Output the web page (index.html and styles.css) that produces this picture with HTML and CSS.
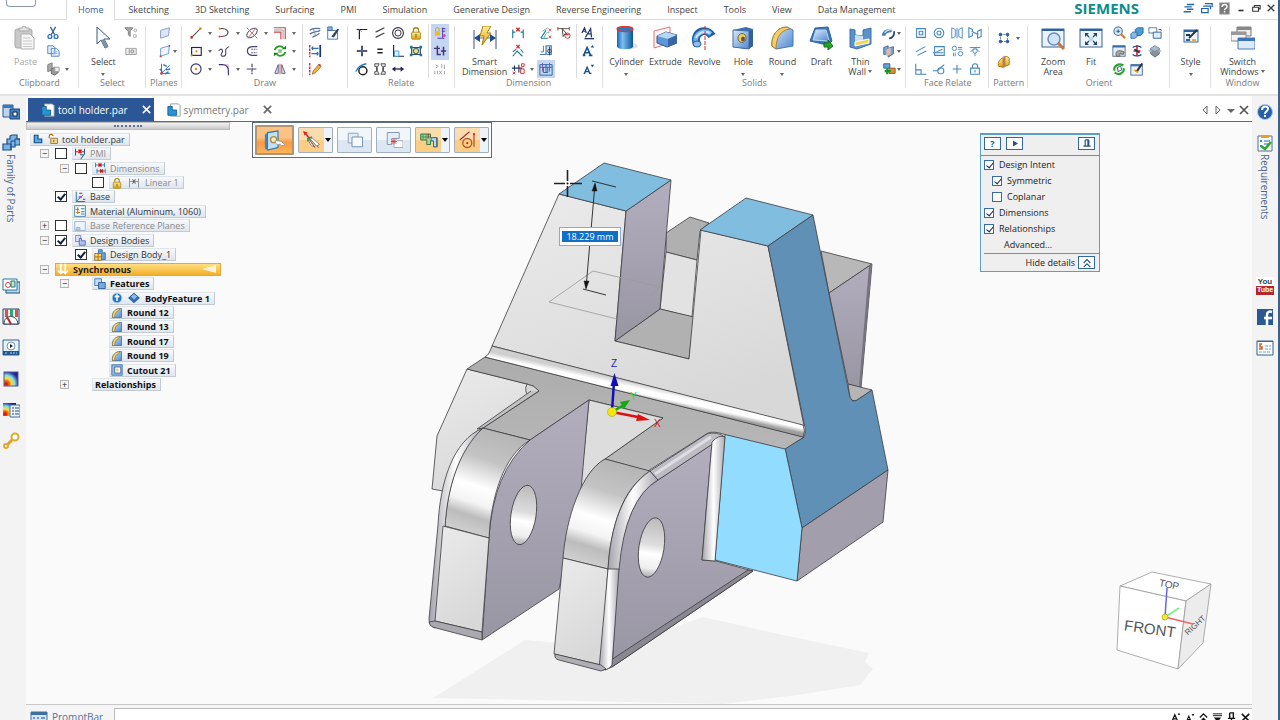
FILE: index.html
```html
<!DOCTYPE html>
<html lang="en">
<head>
<meta charset="utf-8">
<title>tool holder.par</title>
<link rel="stylesheet" href="styles.css">
</head>
<body>
<svg class="sprite" width="0" height="0" aria-hidden="true">
<defs>
<linearGradient id="gb" x1="0" y1="0" x2="1" y2="1"><stop offset="0" stop-color="#d8ebfb"/><stop offset="1" stop-color="#4f86cf"/></linearGradient>
<linearGradient id="gd" x1="0" y1="0" x2="1" y2="0"><stop offset="0" stop-color="#1466b4"/><stop offset=".35" stop-color="#7cc0f0"/><stop offset="1" stop-color="#0c559e"/></linearGradient>
<linearGradient id="gy" x1="0" y1="0" x2="0" y2="1"><stop offset="0" stop-color="#fff0a0"/><stop offset="1" stop-color="#e0a010"/></linearGradient>
<radialGradient id="heat" cx=".15" cy=".85" r="1.1"><stop offset="0" stop-color="#d00"/><stop offset=".2" stop-color="#e61"/><stop offset=".35" stop-color="#fd3"/><stop offset=".55" stop-color="#8dd"/><stop offset=".8" stop-color="#23a"/><stop offset="1" stop-color="#216"/></radialGradient>
</defs>
<symbol id="cut" viewBox="0 0 16 16"><path d="M5 1l5 9M11 1L6 10" stroke="#3b5f8f" stroke-width="1.5"/><circle cx="4.5" cy="12" r="2.2" fill="none" stroke="#2f75c0" stroke-width="1.5"/><circle cx="11.5" cy="12" r="2.2" fill="none" stroke="#2f75c0" stroke-width="1.5"/></symbol>
<symbol id="copy" viewBox="0 0 16 16"><path d="M2 2h6l2 2v7H2zM6 5h6l3 3v6H6z" fill="#e5f0fb" stroke="#4c82bd"/><path d="M8 9h5M8 11h5" stroke="#8cb0da"/></symbol>
<symbol id="pastesp" viewBox="0 0 16 16"><path d="M2 3l5-2v8l-5 2z" fill="#aaa" stroke="#777"/><path d="M6 8l4-2 4 2v4l-4 3-4-2z" fill="#999" stroke="#666"/><path d="M10 6h5v5h-5z" fill="#eee" stroke="#999"/></symbol>
<symbol id="paste" viewBox="0 0 24 24"><rect x="2" y="3" width="17" height="19" rx="2" fill="#c9c9c9" stroke="#a9a9a9"/><path d="M6 5V2h3l1-2h2l1 2h3v3z" fill="#e2e2e2" stroke="#a9a9a9"/><path d="M8 8h9l4 4v11H8z" fill="#f6f6f6" stroke="#b0b0b0"/><path d="M10 12h7M10 15h9M10 18h9M10 20.5h9" stroke="#c9c9c9"/></symbol>
<symbol id="pointer" viewBox="0 0 24 24"><path d="M6 1v17l4-4 4 8 3-1.5-4-7.5h6z" fill="#f6fbff" stroke="#3f5873"/><path d="M10 14l4 8 3-1.5-4-7.5z" fill="#7c93a8"/></symbol>
<symbol id="filter" viewBox="0 0 16 16"><path d="M1 2h9L7 6v6l-2-2V6z" fill="#aaa" stroke="#777"/><circle cx="13" cy="5" r="1.5" fill="none" stroke="#999"/><path d="M11 10h3v3h-3z" fill="none" stroke="#aaa"/></symbol>
<symbol id="selopt" viewBox="0 0 16 16"><path d="M2 5h12v7H2z" fill="#eee" stroke="#999"/><path d="M6 6v5M8 7h3v3H8z" fill="none" stroke="#888"/></symbol>
<symbol id="pl1" viewBox="0 0 16 16"><path d="M3 5l10-3-1 9-9 3z" fill="#dbe7f7" stroke="#7d95bd"/></symbol>
<symbol id="pl2" viewBox="0 0 16 16"><path d="M3 5l10-3-1 9-9 3z" fill="#eef4fc" stroke="#6b93c8"/><circle cx="3" cy="14" r="1.2" fill="#d33"/><circle cx="13" cy="2" r="1" fill="#d33"/></symbol>
<symbol id="pl3" viewBox="0 0 16 16"><path d="M4 2v11h10M4 13l9-9" fill="none" stroke="#2463a8"/><path d="M6 3l4 2M9 9l5-1M2 8l3 3M8 14l4-3" stroke="#2c78c0" stroke-width="1.5"/><circle cx="4" cy="13" r="1.5" fill="#d33"/></symbol>
<symbol id="line" viewBox="0 0 16 16"><path d="M3 13L13 3" stroke="#555" stroke-width="1.2"/><circle cx="3" cy="13" r="1.5" fill="#e22"/><circle cx="13" cy="3" r="1.5" fill="#e80"/></symbol>
<symbol id="arc" viewBox="0 0 16 16"><path d="M4 3c6-1 10 3 8 6-1 3-5 3-8 3" fill="none" stroke="#446" stroke-width="1.200"/><circle cx="3" cy="3" r="1.2" fill="#e80"/><circle cx="3" cy="12" r="1.2" fill="#d33"/></symbol>
<symbol id="curvex" viewBox="0 0 16 16"><ellipse cx="8" cy="8" rx="7" ry="4" transform="rotate(-40 8 8)" fill="none" stroke="#335"/><path d="M2 2l12 12M13 2L3 14" stroke="#d55"/></symbol>
<symbol id="offset" viewBox="0 0 16 16"><path d="M1 2h13v13M1 7h8v8" fill="none" stroke="#c44" stroke-width="1.3"/><path d="M1 4.500h10.500V15" fill="none" stroke="#889"/></symbol>
<symbol id="rect" viewBox="0 0 16 16"><rect x="3" y="4" width="11" height="9" fill="none" stroke="#225" stroke-width="1.3"/><circle cx="8.5" cy="8.5" r="1.3" fill="#e80"/><circle cx="3" cy="13" r="1.2" fill="#e80"/></symbol>
<symbol id="spline" viewBox="0 0 16 16"><path d="M2 8c3-5 6 0 3 3-2 4 5 4 5 0s-1-6 4-8" fill="none" stroke="#446" stroke-width="1.2"/></symbol>
<symbol id="cshape" viewBox="0 0 16 16"><path d="M14 3H8c-7 1-7 9 0 10h6" fill="none" stroke="#447" stroke-width="1.4"/><path d="M7 6h7M7 10h7" stroke="#447" stroke-dasharray="2 1"/></symbol>
<symbol id="green" viewBox="0 0 16 16"><path d="M2 7c1-5 8-6 10-2M14 9c-1 5-8 6-10 2" fill="none" stroke="#2a9a2a" stroke-width="2"/><path d="M10 6h5V2zM6 10H1v4z" fill="#1c7f1c"/><rect x="6" y="6" width="4" height="4" fill="#7c7"/></symbol>
<symbol id="circle" viewBox="0 0 16 16"><circle cx="8" cy="8" r="5.8" fill="none" stroke="#336" stroke-width="1.3"/><circle cx="8" cy="8" r="1.3" fill="#e80"/></symbol>
<symbol id="fillet" viewBox="0 0 16 16"><path d="M2 3h4c5 0 7 3 7 7v5" fill="none" stroke="#337" stroke-width="1.3"/><path d="M9 3h4v4" fill="none" stroke="#c7a" stroke-dasharray="1 1"/></symbol>
<symbol id="trimx" viewBox="0 0 16 16"><path d="M8 2v12" stroke="#447" stroke-width="1.4" stroke-dasharray="4 1"/><path d="M2 8h12" stroke="#447" stroke-width="1.4" stroke-dasharray="5 1"/></symbol>
<symbol id="mirror" viewBox="0 0 16 16"><path d="M6 3v10H2zM10 3v10h4z" fill="#dde6f4" stroke="#558"/><path d="M8 2v12" stroke="#c44"/></symbol>
<symbol id="wrap" viewBox="0 0 16 16"><path d="M2 5c4-4 9-2 12-2M2 9c5-3 9-2 12-4M5 13c3-3 6-1 8-5" fill="none" stroke="#579" stroke-width="1.4"/><path d="M6 3l3 9" stroke="#88a"/></symbol>
<symbol id="table2" viewBox="0 0 16 16"><rect x="2" y="5" width="11" height="10" fill="#fff" stroke="#36c"/><path d="M2 1h5v4H2z" fill="#8bd" stroke="#36a"/><path d="M6 12l7-9 2 1-6 9z" fill="#345"/></symbol>
<symbol id="symdim" viewBox="0 0 16 16"><path d="M2 1v14" stroke="#c22" stroke-width="1.5" stroke-dasharray="3 1"/><path d="M14 1v14" stroke="#236" stroke-width="2"/><path d="M4 5h8M4 11h7M4 5l2-2M4 5l2 2M12 11l-2-2M12 11l-2 2" stroke="#27b" stroke-width="1.3"/></symbol>
<symbol id="pencil" viewBox="0 0 16 16"><path d="M2 1v14" stroke="#c22" stroke-width="1.5" stroke-dasharray="3 1"/><path d="M5 14l1-4 6-7 3 2-6 7z" fill="#f1b43b" stroke="#875"/><path d="M11 3l3-1 1 3z" fill="#c33"/></symbol>
<symbol id="r1" viewBox="0 0 16 16"><path d="M5 15V4h9M2 4h3" fill="none" stroke="#222" stroke-width="1.4"/><path d="M4 3l4 4" stroke="#88a"/></symbol>
<symbol id="r2" viewBox="0 0 16 16"><path d="M3 7l10-5M3 13l10-5" stroke="#444" stroke-width="1.3"/></symbol>
<symbol id="r3" viewBox="0 0 16 16"><circle cx="8" cy="8" r="6.2" fill="none" stroke="#334" stroke-width="1.3"/><circle cx="8" cy="8" r="3.5" fill="none" stroke="#334" stroke-width="1.1"/></symbol>
<symbol id="lock" viewBox="0 0 16 16"><path d="M5 8V5c0-4 6-4 6 0v3" fill="none" stroke="#a8870b" stroke-width="1.5"/><rect x="3" y="7" width="10" height="8" rx="1" fill="url(#gy)" stroke="#a8870b"/><path d="M8 9v4" stroke="#640"/></symbol>
<symbol id="r5" viewBox="0 0 16 16"><path d="M8 2v12M2 8h12" stroke="#224" stroke-width="1.8"/><circle cx="8" cy="8" r="1.5" fill="#27b"/></symbol>
<symbol id="r6" viewBox="0 0 16 16"><path d="M5 6h6M5 10h6" stroke="#222" stroke-width="1.8"/></symbol>
<symbol id="r7" viewBox="0 0 16 16"><path d="M3 1v13h12" fill="none" stroke="#224" stroke-width="1.3"/><path d="M4 8h5v6H4z" fill="#dff0fb" stroke="#3aa0d0"/></symbol>
<symbol id="r8" viewBox="0 0 16 16"><rect x="3" y="4" width="10" height="8" fill="#bcd6c0" stroke="#236"/><circle cx="8" cy="8" r="3" fill="#e7dc88" stroke="#356"/><path d="M1 2h3v3H1zM12 2h3v3h-3zM1 11h3v3H1zM12 11h3v3h-3z" fill="#279"/></symbol>
<symbol id="r9" viewBox="0 0 16 16"><circle cx="9" cy="10" r="4.600" fill="none" stroke="#222" stroke-width="1.7"/><path d="M1 11C3 6 7 3 13 2" fill="none" stroke="#2080c0" stroke-width="1.5"/></symbol>
<symbol id="r10" viewBox="0 0 16 16"><path d="M2 2h5l-2 4v4l2 4H2v-3h2V5H2zM14 2H9l2 4v4l-2 4h5v-3h-2V5h2z" fill="#eee" stroke="#444"/></symbol>
<symbol id="r11" viewBox="0 0 16 16"><path d="M3 8h10" stroke="#225" stroke-width="1.5"/><path d="M1 8l4-3v6zM15 8l-4-3v6z" fill="#225"/></symbol>
<symbol id="r12" viewBox="0 0 16 16"><path d="M3 6V4c0-3 4-3 4 0v2" fill="none" stroke="#c90"/><path d="M2 6h6v5H2z" fill="#e9bb33"/><path d="M10 3h4M10 6h4M5 14h8M11 2v12" stroke="#54a" stroke-width="1.2"/><circle cx="13" cy="11" r="1.5" fill="#c3c"/></symbol>
<symbol id="r13" viewBox="0 0 16 16"><path d="M5 2v10h4M1 5h7M12 13V3M9 8h6" fill="none" stroke="#437" stroke-width="1.7"/></symbol>
<symbol id="r14" viewBox="0 0 16 16"><path d="M3 3l3 2-3 2M10 2v5M13 3v5M2 10v4M5 10v4M7 10l3 4M10 10l-3 4M13 10v4" fill="none" stroke="#999"/></symbol>
<symbol id="smart" viewBox="0 0 24 24"><path d="M1 4v19M23 4v19M2 12h20" stroke="#5a6f92" stroke-width="1.2"/><path d="M1 12l6-4v8zM23 12l-6-4v8z" fill="#1f4c95"/><path d="M10 0h8l-4 7h4L9 19l2-9H7z" fill="url(#gy)" stroke="#a88008"/></symbol>
<symbol id="d1" viewBox="0 0 16 16"><path d="M2 4v10M14 4v10M2 7h3M11 7h3" stroke="#278" stroke-width="1.3"/><path d="M6 2l4 4M10 2L6 6" stroke="#d22" stroke-width="1.5"/></symbol>
<symbol id="d2" viewBox="0 0 16 16"><path d="M2 14l5-6 6 6M2 9l4-3M11 6l3 4" fill="none" stroke="#278" stroke-width="1.3"/><path d="M6 1l4 4M10 1L6 5" stroke="#d22" stroke-width="1.5"/></symbol>
<symbol id="d3" viewBox="0 0 16 16"><path d="M1 7h12M4 4v6M9 3v9" stroke="#236" stroke-width="1.3"/><path d="M12 2h3v3h-3zM2 11l3 3M5 11l-3 3M11 8h4v5h-4z" fill="none" stroke="#d22"/></symbol>
<symbol id="d4" viewBox="0 0 16 16"><path d="M2 14h8M2 14l6-9" stroke="#279" stroke-width="1.3"/><path d="M4 6l6-4M6 13c1-4 3-6 6-6" fill="none" stroke="#4a9"/><path d="M11 3l3 3M14 3l-3 3M11 11l3 3M14 11l-3 3" fill="none" stroke="#d33"/></symbol>
<symbol id="d5" viewBox="0 0 16 16"><path d="M1 12h7V2h6v10H9" fill="#cde4f5" stroke="#47a" stroke-width="1.3"/><path d="M2 9h3V2" fill="none" stroke="#279"/><circle cx="12" cy="8" r="2" fill="#fff" stroke="#236"/><path d="M12 3v10" stroke="#236"/></symbol>
<symbol id="d6" viewBox="0 0 16 16"><path d="M1 3h14v12H1zM1 6h14M5 6v6h5V6M8 3v9" fill="#c2dcf2" stroke="#27589a"/><path d="M4 1v10M12 1v10" stroke="#75a"/></symbol>
<symbol id="d7" viewBox="0 0 16 16"><path d="M1 3h13M1 1v4M14 1v4" stroke="#643"/><path d="M6 3l1 9 2-3 3 1z" fill="#fff" stroke="#333"/><circle cx="12" cy="11" r="3" fill="none" stroke="#d22"/><path d="M10 10h4" stroke="#d22"/></symbol>
<symbol id="ta" viewBox="0 0 16 16"><path d="M1 8l3-6 2 6M2 6h3M5 13l6-10 1 10M7 9h5" fill="none" stroke="#236" stroke-width="1.4"/><path d="M4 14.5h11" stroke="#236" stroke-width="1.5"/></symbol>
<symbol id="tup" viewBox="0 0 16 16"><path d="M3 13L7 4l4 9M5 10h5M2 13h3M9 13h4" fill="none" stroke="currentColor" stroke-width="1.8"/><path d="M11 4l2-3 2 3z" fill="currentColor"/></symbol>
<symbol id="tdn" viewBox="0 0 16 16"><path d="M4 13l3-7 3 7M5 11h4M3 13h2M9 13h3" fill="none" stroke="currentColor" stroke-width="1.5"/><path d="M11 3l2 3 2-3z" fill="currentColor"/></symbol>
<symbol id="cyl" viewBox="0 0 24 24"><ellipse cx="16" cy="20" rx="8" ry="3" fill="#e0e0e0"/><path d="M3 3v18c2 3 14 3 16 0V3z" fill="url(#gd)"/><ellipse cx="11" cy="3" rx="8" ry="2.5" fill="#2b7bc2" stroke="#d33" stroke-width="1.3"/></symbol>
<symbol id="ext" viewBox="0 0 24 24"><path d="M1 5l16-4v16L1 22z" fill="#fff6f5" stroke="#d77"/><path d="M4 10l9-4 11 3v8l-10 4-10-4z" fill="#5d97d8" stroke="#30548c"/><path d="M4 10l9-4 11 3-9 4z" fill="#b6d6f3"/><path d="M15 13l9-4v8l-9 4z" fill="#3767a8"/></symbol>
<symbol id="rev" viewBox="0 0 24 24"><path d="M5 18C0 7 14 0 20 10" fill="none" stroke="#1f5da5" stroke-width="8"/><path d="M4 16C2 8 12 2 19 8" fill="none" stroke="#71b1e8" stroke-width="4.500"/><path d="M4 12c2-5 8-8 14-5" fill="none" stroke="#cce5f8" stroke-width="2"/><ellipse cx="5" cy="18" rx="4" ry="3" fill="#8dbfea" stroke="#2460a3"/><path d="M13 0v24" stroke="#c33" stroke-dasharray="4 1"/></symbol>
<symbol id="hole" viewBox="0 0 24 24"><path d="M2 4l13-3 7 2v17l-7 3-13-2z" fill="#3c6fb0"/><path d="M2 4l16 1v18L2 21z" fill="url(#gb)" stroke="#456da5"/><path d="M18 5l4-1v16l-4 3z" fill="#345f9d"/><ellipse cx="11" cy="12" rx="4" ry="4.500" fill="#f3cd55" stroke="#665"/><ellipse cx="12" cy="13" rx="2" ry="2.500" fill="#654"/></symbol>
<symbol id="round" viewBox="0 0 24 24"><path d="M2 20C1 10 7 1 17 1l6 3v16l-17 3z" fill="url(#gb)" stroke="#4679b4"/><path d="M2 20C1 10 7 1 17 1l3 2C11 4 6 11 6 23z" fill="#f5cf66" stroke="#a78731"/></symbol>
<symbol id="draft" viewBox="0 0 24 24"><path d="M6 2l13-1 4 14-5 4L1 15z" fill="#3d77bb" stroke="#2d619f"/><path d="M7 4h10l3 11-16-1z" fill="url(#gb)" stroke="#b7d9f4"/><path d="M15 17h4v-3l5 6-5 4v-3h-4z" fill="#25a525" stroke="#176c17"/></symbol>
<symbol id="thin" viewBox="0 0 24 24"><path d="M2 3l5 1v5l8 1V4l8-2v16L9 23l-7-2z" fill="#5a91cf" stroke="#3e70ac"/><path d="M7 9v8l8-2v-5z" fill="#c7e0f5"/><path d="M7 16l9-2 5-1v4L7 20z" fill="#f3d65a" stroke="#fff"/></symbol>
<symbol id="s1" viewBox="0 0 16 16"><path d="M2 11c0-4 3-6 9-6" fill="none" stroke="#3f7cbd" stroke-width="4"/><path d="M3 8c2-3 4-4 8-4" fill="none" stroke="#cce3f8" stroke-width="1.5"/><path d="M8 14c5 0 6-4 6-8" fill="none" stroke="#25497b" stroke-width="2"/></symbol>
<symbol id="s2" viewBox="0 0 16 16"><path d="M2 4l5-2v9l-5 1zM7 5l6-2v8l-6 4z" fill="#77a3d4" stroke="#3b6494"/><path d="M5 6l5-2v8l-5 2z" fill="#dba"/></symbol>
<symbol id="s3" viewBox="0 0 16 16"><path d="M2 2h7v5H2z" fill="#64a4df" stroke="#26598d"/><path d="M8 7h7v6H8z" fill="#e08c3b" stroke="#9a4c12"/><path d="M6 7v7M3 10.5h7" stroke="#179a25" stroke-width="2.5"/></symbol>
<symbol id="f1" viewBox="0 0 16 16"><path d="M3 3h10v10H3zM6 6h4v4H6z" fill="none" stroke="#4285bc" stroke-width="1.2"/></symbol>
<symbol id="f2" viewBox="0 0 16 16"><circle cx="8" cy="8" r="5.5" fill="none" stroke="#4285bc" stroke-width="1.2"/><circle cx="8" cy="8" r="2.300" fill="none" stroke="#4285bc" stroke-width="1.2"/></symbol>
<symbol id="f3" viewBox="0 0 16 16"><path d="M2 2l4 2v8l-4 2zM14 2l-4 2v8l4 2zM8 2v12" fill="none" stroke="#4285bc"/></symbol>
<symbol id="f4" viewBox="0 0 16 16"><path d="M1 2l4 2v7l-4 2zM15 4l-4 2v8l4-2zM4 6l8 4" fill="none" stroke="#4285bc" stroke-width="1.2"/></symbol>
<symbol id="f5" viewBox="0 0 16 16"><path d="M2 9l11-6M4 13l10-5" stroke="#4285bc" stroke-width="1.2"/></symbol>
<symbol id="f6" viewBox="0 0 16 16"><path d="M3 3h11v10H3zM1 10h12M5 9l7-3" fill="none" stroke="#4285bc" stroke-width="1.2"/></symbol>
<symbol id="f7" viewBox="0 0 16 16"><circle cx="5" cy="5" r="2.5" fill="none" stroke="#4285bc"/><circle cx="12" cy="11" r="2.5" fill="none" stroke="#4285bc"/><path d="M9 4h5M9 6h5M4 10v4M6 10v4" stroke="#4285bc"/></symbol>
<symbol id="f8" viewBox="0 0 16 16"><path d="M2 4h12M8 4l5 5M8 4L3 9M8 10v4" stroke="#4285bc"/><circle cx="8" cy="8" r="2.5" fill="#fff" stroke="#4285bc"/></symbol>
<symbol id="f9" viewBox="0 0 16 16"><path d="M2 2v12h12M2 9h6v5" fill="none" stroke="#4285bc" stroke-width="1.2"/></symbol>
<symbol id="f10" viewBox="0 0 16 16"><circle cx="10" cy="10" r="3.5" fill="none" stroke="#4285bc" stroke-width="1.2"/><path d="M1 10h5l8-7" fill="none" stroke="#4285bc" stroke-width="1.2"/></symbol>
<symbol id="f11" viewBox="0 0 16 16"><path d="M8 3v10M3 8h10" stroke="#4285bc" stroke-width="1.2"/></symbol>
<symbol id="f12" viewBox="0 0 16 16"><path d="M5 7V5c0-4 6-4 6 0v2M3 7h10v7H3zM8 9v3" fill="none" stroke="#4285bc" stroke-width="1.2"/></symbol>
<symbol id="pat" viewBox="0 0 16 16"><path d="M4 4h8v8H4z" fill="none" stroke="#47a" stroke-dasharray="2 1"/><g fill="#2c6cab" stroke="#174a80"><circle cx="4" cy="4" r="1.5"/><circle cx="12" cy="4" r="1.5"/><circle cx="4" cy="12" r="1.5"/><circle cx="12" cy="12" r="1.5"/></g></symbol>
<symbol id="pmir" viewBox="0 0 16 16"><path d="M7 3v11l-5-1c-2-4 1-8 5-10zM9 2v11l5-2V4c-1-2-3-3-5-2z" fill="url(#gy)" stroke="#a76b08"/><path d="M8 1v14" stroke="#a43"/></symbol>
<symbol id="zarea" viewBox="0 0 24 24"><rect x="1" y="3" width="22" height="18" fill="#eaf4fd" stroke="#3c6194"/><path d="M1 3h22v2H1z" fill="#2f609f"/><circle cx="13" cy="13" r="6" fill="#cfe4f7" stroke="#6a8fb6" stroke-width="1.5"/><path d="M17 17l6 6" stroke="#c87832" stroke-width="3"/></symbol>
<symbol id="fit" viewBox="0 0 24 24"><rect x="1" y="3" width="22" height="18" fill="#edf5fc" stroke="#3c6194"/><path d="M1 3h22v2H1z" fill="#2f609f"/><path d="M7 8l3 3M17 8l-3 3M7 18l3-3M17 18l-3-3" stroke="#246" stroke-width="1.3"/><path d="M6 7h4l-4 4zM18 7h-4l4 4zM6 19h4l-4-4zM18 19h-4l4-4z" fill="#246"/><path d="M10 11h4v4h-4z" fill="#bcd8ef"/></symbol>
<symbol id="o1" viewBox="0 0 16 16"><circle cx="7" cy="6" r="4.800" fill="#cfe6fb" stroke="#4a77a6" stroke-width="1.3"/><path d="M10 9l5 5" stroke="#d08032" stroke-width="2.500"/><path d="M5 6h4M7 4v4" stroke="#246"/></symbol>
<symbol id="o2" viewBox="0 0 16 16"><path d="M6 4l3-2h6v6l-3 3H6z" fill="#4a9bd8" stroke="#246ca5"/><path d="M1 9l2-2h5v5l-2 2H1z" fill="#85b9e4" stroke="#38699d"/></symbol>
<symbol id="o3" viewBox="0 0 16 16"><path d="M1 2h9v6H1z" fill="#fff" stroke="#4d7298"/><path d="M6 7h9v7H6z" fill="#e0edf9" stroke="#2c5e95"/><path d="M12 4h3v2" fill="none" stroke="#359"/></symbol>
<symbol id="o4" viewBox="0 0 16 16"><rect x="1" y="2" width="14" height="12" fill="#e5edf5" stroke="#4a6a94"/><path d="M1 2h14v2H1z" fill="#3a6aa8"/><path d="M5 14c-2-6 2-8 9-5l-1 3-4-1v3z" fill="#a9a69d" stroke="#666"/></symbol>
<symbol id="o5" viewBox="0 0 16 16"><path d="M3 4c4-3 9-1 10 0M3 12c4 3 9 1 10 0" fill="none" stroke="#1e4f95" stroke-width="1.5"/><path d="M8 1v13M4 8h8" stroke="#c22" stroke-width="1.8"/><path d="M5 6l6 4" stroke="#236" stroke-width="2"/></symbol>
<symbol id="o6" viewBox="0 0 16 16"><path d="M8 2l5 3v6l-5 4-5-4V5z" fill="#86929c" stroke="#566"/><path d="M0 8l4-2v4zM16 8l-4-2v4zM3 5l5-3 5 3-5 3z" fill="#a9bbca"/></symbol>
<symbol id="o7" viewBox="0 0 16 16"><path d="M3 10C1 4 8 1 13 4M13 7c2 5-5 9-10 5" fill="none" stroke="#28a52c" stroke-width="2.5"/><path d="M6 6l4-1 1 4-4 2z" fill="#fff" stroke="#247"/></symbol>
<symbol id="o8" viewBox="0 0 16 16"><rect x="1" y="3" width="13" height="12" fill="#edf4fb" stroke="#3c6194"/><path d="M1 3h13v2H1z" fill="#4278b5"/><path d="M6 11l7-10 2 1-6 9z" fill="#234"/><path d="M5 9l4 3" stroke="#e90" stroke-width="2"/></symbol>
<symbol id="style" viewBox="0 0 16 16"><rect x="1" y="2" width="14" height="12" fill="#ebf3fb" stroke="#3a67a2"/><path d="M1 2h14v2H1zM3 11h4v2H3z" fill="#2d629f"/><path d="M6 10l8-8M3 7h4" stroke="#234" stroke-width="1.8"/><path d="M9 11h4v2H9z" fill="#e9b13c"/></symbol>
<symbol id="switch" viewBox="0 0 24 24"><path d="M6 1h14v9H6z" fill="#eee" stroke="#777"/><path d="M6 1h14v3H6z" fill="#888"/><path d="M0 6h15v9H0z" fill="#f4f4f4" stroke="#888"/><path d="M0 6h15v3H0z" fill="#999"/><path d="M7 12h17v11H7z" fill="#dceafa" stroke="#4d7db7"/><path d="M7 12h17v3H7z" fill="#3d73ba"/></symbol>
<symbol id="doc" viewBox="0 0 16 16"><path d="M4 1h9l2 2v12H4z" fill="#fff" stroke="#899"/><path d="M1 4h5v4h5v6H1z" fill="#2794d5" stroke="#135a93"/></symbol>
<symbol id="part" viewBox="0 0 16 16"><path d="M3 3h5v5h5v5H3z" fill="#57a8e8" stroke="#13507f" stroke-width="1.5"/></symbol>
<symbol id="unlock" viewBox="0 0 16 16"><path d="M3 7V4c0-3 5-3 5 0" fill="none" stroke="#a56a15" stroke-width="1.5"/><path d="M5 7h9v7H5z" fill="#f4d48a" stroke="#8c6316"/><path d="M9 9v3" stroke="#531"/></symbol>
<symbol id="tpmi" viewBox="0 0 16 16"><path d="M2 1v9M14 1v8M2 5h4M10 5h4M8 9h5l-4 6" fill="none" stroke="#2a4d6b" stroke-width="1.3"/><path d="M6 2l4 5M10 2L6 7" stroke="#d11" stroke-width="2"/></symbol>
<symbol id="tdim" viewBox="0 0 16 16"><path d="M2 1v6M14 1v6M2 4h12M4 9v6M15 9v6M4 12h11" stroke="#2680a8" stroke-width="1.2"/><path d="M6 2l4 4M10 2L6 6M8 10l4 4M12 10l-4 4" stroke="#c11" stroke-width="2"/></symbol>
<symbol id="tlin" viewBox="0 0 16 16"><path d="M2 2v12M14 2v12M2 6h12" stroke="#8a949c" stroke-width="1.3"/><path d="M6 3l4 6M10 3L6 9" stroke="#555" stroke-width="1.3"/></symbol>
<symbol id="tbase" viewBox="0 0 16 16"><path d="M3 1v13h12M3 14l9-9" fill="none" stroke="#2175ab" stroke-width="1.3"/><path d="M7 3h4M6 8h4M12 11h3" stroke="#536" stroke-width="1.3"/><circle cx="9" cy="8" r="1.5" fill="#a5a"/></symbol>
<symbol id="tmat" viewBox="0 0 16 16"><rect x="1" y="1" width="14" height="14" fill="#fff" stroke="#268"/><path d="M5 3v9M2 6h5M3 10h5" stroke="#c72" stroke-width="1.6"/><path d="M9 5h5M9 9h5M9 12h5" stroke="#18a" stroke-width="1.3"/></symbol>
<symbol id="tpl" viewBox="0 0 16 16"><path d="M1 2h14v12H1z" fill="#edf3fa" stroke="#8ba5c7"/><path d="M3 10h5v3H3z" fill="#c7daed" stroke="#8ba5c7"/></symbol>
<symbol id="tbod" viewBox="0 0 16 16"><path d="M2 2h7v8H2z" fill="#d9dff4" stroke="#6372b5"/><path d="M7 6h3v3h5v6H7z" fill="#acc2ef" stroke="#4057ae"/></symbol>
<symbol id="tbod1" viewBox="0 0 16 16"><path d="M6 1h5v4h4v9H6z" fill="#6f9fdc" stroke="#2d559c"/><path d="M1 6h9v9H1zM5.5 6v9M1 10.5h9" fill="#ffd66c" stroke="#8d5e0d"/></symbol>
<symbol id="tsync" viewBox="0 0 16 16"><path d="M5 1v13M11 1v13M1 10l4 4 3-3 3 3 4-4" fill="none" stroke="#fff" stroke-width="2.2"/></symbol>
<symbol id="tfeat" viewBox="0 0 16 16"><path d="M1 1h9v9H1z" fill="#c7ddf5" stroke="#26659f"/><path d="M6 6h9v8H6z" fill="#76a9df" stroke="#124d8c"/></symbol>
<symbol id="info" viewBox="0 0 16 16"><circle cx="8" cy="8" r="6.5" fill="#2276c5" stroke="#b9d7f2"/><path d="M8 4v8M5 7l3-3 3 3" fill="none" stroke="#fff" stroke-width="2"/></symbol>
<symbol id="bf" viewBox="0 0 16 16"><path d="M8 1l8 7-8 7-8-7z" fill="#346daf"/><path d="M8 2l5 4-5 5-5-5z" fill="#8ab8e8" stroke="#275887"/></symbol>
<symbol id="trnd" viewBox="0 0 16 16"><path d="M2 14C1 7 6 2 14 2v12z" fill="url(#gb)" stroke="#3d6aa3"/><path d="M2 14C1 7 6 2 12 2l-2 3C6 6 5 10 5 14z" fill="#f3da73" stroke="#857643"/></symbol>
<symbol id="tcut" viewBox="0 0 16 16"><path d="M1 1h14v14H1z" fill="#8db7e5" stroke="#356da7"/><path d="M5 4h8v8H5z" fill="#fff" stroke="#36568b"/><path d="M7 6h3v4H7z" fill="#f5cd67"/></symbol>
<symbol id="c1" viewBox="0 0 24 24"><path d="M4 3l12-2v19l-12 3z" fill="#bfe0fb" stroke="#2873aa" stroke-width="1.2"/><path d="M4 3L1 5v16l3 2z" fill="#4184c1"/><circle cx="11" cy="11" r="3.500" fill="#fbe9bb" stroke="#ae8a45" stroke-width="1.5"/><path d="M13 12l7 1 4 4-4 1-2-2-2 1-3-2z" fill="#fff" stroke="#89a"/></symbol>
<symbol id="c2" viewBox="0 0 24 24"><path d="M7 9l14 13" fill="none" stroke="#555" stroke-width="1.300"/><path d="M7 9l9 13-6-4-4-8zM12 9l10 9-4 2-8-9z" fill="#fff" stroke="#556b86"/><path d="M6 9l10 13" stroke="#b33" stroke-dasharray="3 1"/><path d="M12 8l-5 2-1 4" fill="none" stroke="#2c9a3d" stroke-width="1.800"/><path d="M8 9L3 3" stroke="#d22" stroke-width="2"/><path d="M0 0l6 2-4 4z" fill="#d22"/></symbol>
<symbol id="c3" viewBox="0 0 24 24"><path d="M3 3h13v13H3z" fill="#e4edf6" stroke="#8da4c0" stroke-width="1.3"/><path d="M8 8h14v13H8z" fill="#f7faff" stroke="#7590b2" stroke-width="1.3"/></symbol>
<symbol id="c4" viewBox="0 0 24 24"><path d="M3 2h16v8H9v8H3z" fill="#e4edf6" stroke="#8497b3" stroke-width="1.3"/><path d="M16 13h8v9H12v-4" fill="#fff" stroke="#8497b3"/><path d="M8 14h8M12 10v8M9 11l6 6M15 11l-6 6" stroke="#e32" stroke-width="1.2"/></symbol>
<symbol id="c5" viewBox="0 0 24 24"><path d="M1 4h13v5h9v12h-5v-8h-4v5H9v-6H1z" fill="#a9d493" stroke="#277c46" stroke-width="1.3"/><path d="M15 9h7v12h-4v-8h-3z" fill="#b9dbee" stroke="#26578f"/><path d="M4 4v8M8 4v8M1 8h13" stroke="#35894c"/><path d="M11 4v6" stroke="#a33" stroke-width="1.500"/></symbol>
<symbol id="c6" viewBox="0 0 24 24"><circle cx="11" cy="16" r="6" fill="none" stroke="#b05c2c" stroke-width="1.8"/><circle cx="11" cy="16" r="1.5" fill="#c22"/><path d="M1 12L14 1M20 4v17" stroke="#933" stroke-width="1.4"/><circle cx="20" cy="4" r="1.5" fill="#d22"/></symbol>
<symbol id="l1" viewBox="0 0 18 18"><path d="M1 2h10v12H1z" fill="#c0d5ec" stroke="#255692"/><path d="M1 2h10v3H1z" fill="#347ac0"/><path d="M8 6h10v10H8z" fill="#3d7ec1" stroke="#1d4775"/><path d="M11 9h4v4h-4z" fill="#fff" stroke="#124"/></symbol>
<symbol id="l2" viewBox="0 0 18 18"><path d="M8 2l2-1h5v4h3v6h-5v2H9v3H1v-6h4V5h3z" fill="#7cb3e5" stroke="#1e4e83" stroke-width="1.2"/><path d="M5 10h4v6M13 11V5h5M9 13V7h4" fill="none" stroke="#1e4e83"/></symbol>
<symbol id="l3" viewBox="0 0 18 18"><path d="M4 5h14v11H4z" fill="#b7d5e8" stroke="#19556f"/><path d="M1 2h14v11H1z" fill="#fff" stroke="#267ba1"/><circle cx="6" cy="8" r="2.5" fill="none" stroke="#d44"/><path d="M9 4h4v6H9z" fill="#bde5cd" stroke="#277"/></symbol>
<symbol id="l4" viewBox="0 0 18 18"><path d="M1 1h16v15H1z" fill="#dceefa" stroke="#247"/><path d="M3 1h3v8H3z" fill="#e64c40"/><path d="M8 1h3v8H8z" fill="#36a36a"/><path d="M13 1h3v8h-3z" fill="#e64c40"/><path d="M2 16c0-10 13-10 14 0z" fill="#fff" stroke="#345"/><path d="M9 16L5 9" stroke="#c22" stroke-width="2"/></symbol>
<symbol id="l5" viewBox="0 0 18 18"><path d="M1 1h16v15H1z" fill="#e7f3fb" stroke="#356493"/><path d="M1 12h16v4H1z" fill="#24588e"/><circle cx="9" cy="7" r="4" fill="#fff" stroke="#79a"/><path d="M8 5l3 2-3 2z" fill="#123"/><path d="M3 14h3M8 14h7" stroke="#adf" stroke-dasharray="2 1"/></symbol>
<symbol id="l6" viewBox="0 0 18 18"><rect x="2" y="2" width="14" height="14" fill="url(#heat)" stroke="#559"/></symbol>
<symbol id="l7" viewBox="0 0 18 18"><rect x="1" y="2" width="13" height="13" fill="url(#heat)"/><path d="M8 4h10v12H8z" fill="#eaf4ff" stroke="#456f9d"/><path d="M10 7h2M13 7h4M10 10h2M13 10h4M10 13h2M13 13h4" stroke="#27517f"/></symbol>
<symbol id="l8" viewBox="0 0 18 18"><path d="M5 13l8-8" stroke="#dda321" stroke-width="3"/><circle cx="13" cy="5" r="3.5" fill="#fff" stroke="#e0ac2b" stroke-width="2"/><circle cx="4" cy="14" r="2" fill="#fff" stroke="#e0ac2b" stroke-width="2"/></symbol>
<symbol id="help" viewBox="0 0 18 18"><circle cx="9" cy="9" r="7.5" fill="#2560a8" stroke="#aac4e4"/><path d="M6 7c0-5 7-4 6-1 0 2-3 2-3 5M9 12v2" fill="none" stroke="#fff" stroke-width="2"/></symbol>
<symbol id="req" viewBox="0 0 18 18"><path d="M2 2h14v15H2z" fill="#f6fbff" stroke="#58708b"/><path d="M5 4V1h8v3z" fill="#eb9e27"/><path d="M4 6h2v2H4zM4 11h2v2H4z" fill="#368fc1"/><path d="M8 7h6M8 10h6" stroke="#369"/><path d="M5 12l4 3 6-7" fill="none" stroke="#2ea52d" stroke-width="2.5"/></symbol>
<symbol id="fb" viewBox="0 0 18 18"><path d="M1 1h16v16H1z" fill="#295893"/><path d="M11 17V7c0-3 2-4 5-3M8 10h8" fill="none" stroke="#fff" stroke-width="2.5"/></symbol>
<symbol id="form" viewBox="0 0 18 18"><path d="M1 2h16v14H1z" fill="#fff" stroke="#315e90"/><path d="M1 2h16v1H1z" fill="#316aab"/><path d="M6 5H4v3h2v2H3" fill="none" stroke="#d46125" stroke-width="1.5"/><path d="M9 7h6M9 10h6M3 13h12" stroke="#67a4d4" stroke-dasharray="3 1"/></symbol>
<symbol id="w1" viewBox="0 0 16 16"><path d="M6 3h9M3 6h9M6 9h8M2 12h9" stroke="#246aac" stroke-width="1.8"/></symbol>
<symbol id="w2" viewBox="0 0 16 16"><path d="M6 2h9v4M4 5h9v4M2 8h8v5H2z" fill="none" stroke="#2262ad" stroke-width="1.5"/></symbol>
<symbol id="q" viewBox="0 0 16 16"><path d="M2 1h12v14H2z" fill="#777" stroke="#aaa"/><path d="M5 6c0-4 7-4 6 0 0 2-3 2-3 4M8 11v2" fill="none" stroke="#fff" stroke-width="1.8"/></symbol>
<symbol id="x" viewBox="0 0 12 12"><path d="M2 2l8 8M10 2l-8 8" stroke="currentColor" stroke-width="1.7"/></symbol>
<symbol id="kb" viewBox="0 0 18 12"><path d="M1 1h16v11H1z" fill="#d7e6f3" stroke="#48719c"/><path d="M1 1h16v3H1z" fill="#3f6ea3"/><path d="M3 6h2v2H3zM7 6h2v2H7zM11 6h4v2h-4zM3 10h12" fill="#6d97c0"/></symbol>
<symbol id="pin" viewBox="0 0 12 12"><path d="M4 1h4v6M4 1v6M2 7h8M6 7v5" fill="none" stroke="currentColor" stroke-width="1.5"/></symbol>
<symbol id="chev" viewBox="0 0 12 12"><path d="M2 6l4-4 4 4M2 11l4-4 4 4" fill="none" stroke="currentColor" stroke-width="1.4"/></symbol>
</svg>

<header class="top">
<div class="appbtn"></div>
<nav class="menu">
<a href="#" class="on">Home</a><a href="#">Sketching</a><a href="#">3D Sketching</a><a href="#">Surfacing</a><a href="#">PMI</a><a href="#">Simulation</a><a href="#">Generative Design</a><a href="#">Reverse Engineering</a><a href="#">Inspect</a><a href="#">Tools</a><a href="#">View</a><a href="#">Data Management</a>
</nav>
<strong class="brand">SIEMENS</strong>
<div class="wctl">
<button aria-label="Ribbon layout"><svg><use href="#w1"/></svg></button><button aria-label="Arrange"><svg><use href="#w2"/></svg></button><button aria-label="Help"><svg><use href="#q"/></svg></button>
<button class="s" aria-label="Minimize"><svg viewBox="0 0 12 12"><path d="M3 9h6" stroke="#333" stroke-width="2"/></svg></button><button class="s" aria-label="Restore"><svg viewBox="0 0 12 12"><path d="M4 5V3h7v4H9M2 5h7v5H2z" fill="none" stroke="#333" stroke-width="1.3"/></svg></button><button class="s" aria-label="Close"><svg><use href="#x"/></svg></button>
</div>
</header>

<div class="ribbon">
<section class="g"><div class="b">
<button class="lg off"><svg><use href="#paste"/></svg>Paste</button>
<div class="col"><button class="ic" aria-label="Cut"><svg><use href="#cut"/></svg></button><button class="ic" aria-label="Copy"><svg><use href="#copy"/></svg></button><button class="ic m" aria-label="Paste special"><svg><use href="#pastesp"/></svg></button></div>
</div><h2>Clipboard</h2></section>
<section class="g"><div class="b">
<button class="lg dn"><svg><use href="#pointer"/></svg>Select</button>
<div class="col"><button class="ic" aria-label="Filter"><svg><use href="#filter"/></svg></button><button class="ic" aria-label="Select options"><svg><use href="#selopt"/></svg></button></div>
</div><h2>Select</h2></section>
<section class="g end"><div class="b">
<div class="col"><button class="ic" aria-label="Coincident plane"><svg><use href="#pl1"/></svg></button><button class="ic m" aria-label="More planes"><svg><use href="#pl2"/></svg></button><button class="ic" aria-label="Coordinate system"><svg><use href="#pl3"/></svg></button></div>
</div><h2>Planes</h2></section>
<section class="g"><div class="b">
<div class="grid wide">
<button class="ic m" aria-label="Line"><svg><use href="#line"/></svg></button><button class="ic m" aria-label="Arc"><svg><use href="#arc"/></svg></button><button class="ic m" aria-label="Trim"><svg><use href="#curvex"/></svg></button><button class="ic m" aria-label="Offset"><svg><use href="#offset"/></svg></button>
<button class="ic m" aria-label="Rectangle"><svg><use href="#rect"/></svg></button><button class="ic" aria-label="Curve"><svg><use href="#spline"/></svg></button><button class="ic" aria-label="Extend"><svg><use href="#cshape"/></svg></button><button class="ic m" aria-label="Move"><svg><use href="#green"/></svg></button>
<button class="ic m" aria-label="Circle"><svg><use href="#circle"/></svg></button><button class="ic m" aria-label="Fillet"><svg><use href="#fillet"/></svg></button><button class="ic" aria-label="Split"><svg><use href="#trimx"/></svg></button><button class="ic m" aria-label="Mirror"><svg><use href="#mirror"/></svg></button>
</div><i class="v"></i>
<div class="col"><button class="ic" aria-label="Project"><svg><use href="#wrap"/></svg></button><button class="ic" aria-label="Symmetric"><svg><use href="#symdim"/></svg></button><button class="ic" aria-label="Sketch edit"><svg><use href="#pencil"/></svg></button></div>
<div class="col"><button class="ic" aria-label="Sketch view"><svg><use href="#table2"/></svg></button></div>
</div><h2>Draw</h2></section>
<section class="g"><div class="b">
<div class="grid">
<button class="ic" aria-label="Connect"><svg><use href="#r1"/></svg></button><button class="ic" aria-label="Parallel"><svg><use href="#r2"/></svg></button><button class="ic" aria-label="Concentric"><svg><use href="#r3"/></svg></button><button class="ic" aria-label="Lock"><svg><use href="#lock"/></svg></button>
<button class="ic" aria-label="Horizontal"><svg><use href="#r5"/></svg></button><button class="ic" aria-label="Equal"><svg><use href="#r6"/></svg></button><button class="ic" aria-label="Perpendicular"><svg><use href="#r7"/></svg></button><button class="ic" aria-label="Rigid set"><svg><use href="#r8"/></svg></button>
<button class="ic" aria-label="Tangent"><svg><use href="#r9"/></svg></button><button class="ic" aria-label="Symmetric"><svg><use href="#r10"/></svg></button><button class="ic" aria-label="Collinear"><svg><use href="#r11"/></svg></button>
</div><i class="v n"></i>
<div class="col"><button class="ic hot" aria-label="Maintain relationships"><svg><use href="#r12"/></svg></button><button class="ic hot" aria-label="Relationship handles"><svg><use href="#r13"/></svg></button><button class="ic" aria-label="Relationship colors"><svg><use href="#r14"/></svg></button></div>
</div><h2>Relate</h2></section>
<section class="g"><div class="b">
<button class="lg x"><svg><use href="#smart"/></svg>Smart Dimension</button>
<div class="col"><button class="ic" aria-label="Distance"><svg><use href="#d1"/></svg></button><button class="ic" aria-label="Angle"><svg><use href="#d2"/></svg></button><button class="ic m" aria-label="Coordinate dimension"><svg><use href="#d3"/></svg></button></div>
<div class="col"><button class="ic" aria-label="Angular coordinate"><svg><use href="#d4"/></svg></button><button class="ic" aria-label="Symmetric diameter"><svg><use href="#d5"/></svg></button><button class="ic hot" aria-label="Auto dimension"><svg><use href="#d6"/></svg></button></div>
<div class="col"><button class="ic" aria-label="Dimension select"><svg><use href="#d7"/></svg></button></div><i class="v n"></i>
<div class="col blue"><button class="ic" aria-label="Text style"><svg><use href="#ta"/></svg></button><button class="ic" aria-label="Larger text"><svg><use href="#tup"/></svg></button><button class="ic" aria-label="Smaller text"><svg><use href="#tdn"/></svg></button></div>
</div><h2>Dimension</h2></section>
<section class="g solids"><div class="b">
<button class="lg dn"><svg><use href="#cyl"/></svg>Cylinder</button><button class="lg"><svg><use href="#ext"/></svg>Extrude</button><button class="lg"><svg><use href="#rev"/></svg>Revolve</button><button class="lg dn"><svg><use href="#hole"/></svg>Hole</button><button class="lg dn"><svg><use href="#round"/></svg>Round</button><button class="lg"><svg><use href="#draft"/></svg>Draft</button><button class="lg"><svg><use href="#thin"/></svg><span class="two">Thin Wall <i class="tri"></i></span></button>
<div class="col"><button class="ic m" aria-label="Sweep"><svg><use href="#s1"/></svg></button><button class="ic m" aria-label="Rib"><svg><use href="#s2"/></svg></button><button class="ic m" aria-label="Add body"><svg><use href="#s3"/></svg></button></div>
</div><h2>Solids</h2></section>
<section class="g"><div class="b"><div class="grid">
<button class="ic" aria-label="Coplanar"><svg><use href="#f1"/></svg></button><button class="ic" aria-label="Concentric faces"><svg><use href="#f2"/></svg></button><button class="ic" aria-label="Symmetric faces"><svg><use href="#f3"/></svg></button><button class="ic" aria-label="Offset faces"><svg><use href="#f4"/></svg></button>
<button class="ic" aria-label="Parallel faces"><svg><use href="#f5"/></svg></button><button class="ic" aria-label="Aligned holes"><svg><use href="#f6"/></svg></button><button class="ic" aria-label="Equal radius"><svg><use href="#f7"/></svg></button><button class="ic" aria-label="Horizontal faces"><svg><use href="#f8"/></svg></button>
<button class="ic" aria-label="Perpendicular faces"><svg><use href="#f9"/></svg></button><button class="ic" aria-label="Tangent faces"><svg><use href="#f10"/></svg></button><button class="ic" aria-label="Ground"><svg><use href="#f11"/></svg></button><button class="ic" aria-label="Rigid"><svg><use href="#f12"/></svg></button>
</div></div><h2>Face Relate</h2></section>
<section class="g"><div class="b"><div class="col pat"><button class="ic m" aria-label="Pattern"><svg><use href="#pat"/></svg></button><button class="ic" aria-label="Mirror pattern"><svg><use href="#pmir"/></svg></button></div></div><h2>Pattern</h2></section>
<section class="g"><div class="b">
<button class="lg"><svg><use href="#zarea"/></svg><span class="two">Zoom Area</span></button><button class="lg"><svg><use href="#fit"/></svg>Fit</button>
<div class="grid three"><button class="ic" aria-label="Zoom"><svg><use href="#o1"/></svg></button><button class="ic" aria-label="Views"><svg><use href="#o2"/></svg></button><button class="ic" aria-label="Previous view"><svg><use href="#o3"/></svg></button><button class="ic" aria-label="Pan"><svg><use href="#o4"/></svg></button><button class="ic" aria-label="Rotate"><svg><use href="#o5"/></svg></button><button class="ic" aria-label="Look at face"><svg><use href="#o6"/></svg></button><button class="ic" aria-label="Spin"><svg><use href="#o7"/></svg></button><button class="ic" aria-label="Sketch view"><svg><use href="#o8"/></svg></button></div>
</div><h2>Orient</h2></section>
<section class="g"><div class="b"><button class="lg dn sm"><svg><use href="#style"/></svg>Style</button></div></section>
<section class="g"><div class="b"><button class="lg x"><svg><use href="#switch"/></svg><span>Switch Windows <i class="tri"></i></span></button></div><h2>Window</h2></section>
</div>

<div class="work">
<aside class="rail">
<button aria-label="PathFinder"><svg><use href="#l1"/></svg></button>
<button class="vt"><svg><use href="#l2"/></svg><span>Family of Parts</span></button>
<button aria-label="Library"><svg><use href="#l3"/></svg></button><button aria-label="Sensors"><svg><use href="#l4"/></svg></button><button aria-label="Playback"><svg><use href="#l5"/></svg></button><button aria-label="Simulation"><svg><use href="#l6"/></svg></button><button aria-label="Results"><svg><use href="#l7"/></svg></button><button aria-label="Key"><svg><use href="#l8"/></svg></button>
</aside>

<main class="mid">
<div class="tabs">
<div class="tab on"><svg><use href="#doc"/></svg><a href="#">tool holder.par</a><button aria-label="Close tool holder"><svg><use href="#x"/></svg></button></div>
<div class="tab"><svg><use href="#doc"/></svg><a href="#">symmetry.par</a><button aria-label="Close symmetry"><svg><use href="#x"/></svg></button></div>
<div class="tabctl"><button aria-label="Previous"><svg viewBox="0 0 12 12"><path d="M8 2v8L4 6z" fill="none" stroke="#666"/></svg></button><button aria-label="Next"><svg viewBox="0 0 12 12"><path d="M4 2v8l4-4z" fill="none" stroke="#666"/></svg></button><button aria-label="List"><svg viewBox="0 0 12 12"><path d="M2 5h8l-4 4z" fill="#666"/></svg></button><button aria-label="Close document"><svg><use href="#x"/></svg></button></div>
</div>

<div class="view">
<svg class="model" viewBox="26 122 1226 582" preserveAspectRatio="xMinYMin meet">
<defs>
<linearGradient id="face" x1="0" y1="0" x2=".4" y2="1"><stop offset="0" stop-color="#ebebeb"/><stop offset=".6" stop-color="#e0e0e0"/><stop offset="1" stop-color="#d8d8d8"/></linearGradient>
<linearGradient id="lil" x1="0" y1="0" x2="0" y2="1"><stop offset="0" stop-color="#b2aebd"/><stop offset="1" stop-color="#9996a4"/></linearGradient>
<linearGradient id="shelf" x1="0" y1="0" x2="0" y2="1"><stop offset="0" stop-color="#acacac"/><stop offset="1" stop-color="#b9b9b9"/></linearGradient>
<linearGradient id="bend" x1=".6" y1="0" x2=".35" y2="1"><stop offset="0" stop-color="#b4b4b4"/><stop offset=".3" stop-color="#c4c4c4"/><stop offset=".55" stop-color="#fff"/><stop offset=".7" stop-color="#f4f4f4"/><stop offset=".82" stop-color="#bcbcbc"/><stop offset="1" stop-color="#d2d2d2"/></linearGradient>
<linearGradient id="rim" x1="0" y1="0" x2="1" y2="0"><stop offset="0" stop-color="#a4a3aa"/><stop offset=".5" stop-color="#fff"/><stop offset="1" stop-color="#aaa8b2"/></linearGradient>
<linearGradient id="roll" gradientUnits="userSpaceOnUse" x1="650" y1="386" x2="647" y2="400"><stop offset="0" stop-color="#cfcfcf"/><stop offset=".35" stop-color="#fff"/><stop offset=".65" stop-color="#fff"/><stop offset="1" stop-color="#9e9e9e"/></linearGradient>
<linearGradient id="bore" x1="0" y1="0" x2="0" y2="1"><stop offset="0" stop-color="#bbb"/><stop offset=".45" stop-color="#ddd"/><stop offset=".6" stop-color="#fff"/><stop offset=".85" stop-color="#eee"/><stop offset="1" stop-color="#aaa"/></linearGradient>
</defs>
<path d="M433 698L525 640l90 8 88-31 80 18 86 18-4 9 8 7-13 16-62 10-75 9z" fill="#f0f0f0"/>
<g stroke="#3c3c40" stroke-width=".8" stroke-linejoin="round">
<path d="M821 251l51 13-43 29z" fill="#b8b8b8"/><path d="M829 293l43-29-11 124-13-4z" fill="url(#lil)"/><path d="M872 264l-11 124-2-1 10-121z" fill="#77747f" stroke="none"/>
<path d="M848 384l24 6-16 11-6-1z" fill="#b5b5b5"/>
<path d="M666 233l24-16 19 6-9 8-3 29-31-8z" fill="#b0b0b0"/><path d="M666 252l31 8-5 57-32-8z" fill="#e2e2e2"/>
<path d="M615 341l45-32 34 8-5 42z" fill="#b1b1b1"/>
<path d="M559 194l67 17-11 130 74 18 12-129 67 16 36 180-312-80z" fill="url(#face)"/>
<path d="M626 211l45-31-11 129-45 32z" fill="url(#lil)"/>
<path d="M604 163l67 17-45 31-67-17z" fill="#80bddf"/><path d="M746 198l67 17-45 31-68-16z" fill="#80bddf"/>
<path d="M768 246l45-31 36 178q2 11 8 7l15-10 16 80-86 58-17-80 18-10q4-5 1-15z" fill="#6190b7"/>
<path d="M802 528l86-58-5 52-86 59z" fill="#a29eac"/>
<path d="M725 434l60 14 17 80-5 53-82-21z" fill="#91dcff"/>
<path d="M467 369l60 15q8 0 12 7l-56 37q-25 17-40 63l-11-2 5-53z" fill="url(#face)"/>
<path d="M467 369l18-12 319 80-19 12-62-15q-9-3-15-1l-60 38-43-12 58-41-74-18-59 40-47-12 56-37q-5-6-12-7z" fill="url(#shelf)"/>
<path d="M492 346l311 79q3 6 0 12l-318-80q4-2 7-11z" fill="url(#roll)"/>
<path d="M527 384q-2 3-1 8l3 5 10-6q-5-6-12-7z" fill="#d7d7d7"/>
<path d="M539 391l-56 37-6 1 54-38" fill="#c2c2c2"/>
<path d="M589 400l74 18-58 41q-15 9-25 32z" fill="#dddddd"/>
<path d="M530 440l59-40-8 90-22 99-77 51 7-102q4-66 41-98z" fill="url(#lil)"/>
<path d="M483 428l47 12c-27 16-39 58-41 98l-44-12c2-38 15-80 38-98z" fill="url(#bend)"/>
<path d="M483 428c-30 12-43 55-45 97l-9 94q0 7 6 9l10-100c2-40 14-78 38-100z" fill="url(#rim)"/>
<path d="M443 526l46 12-7 94-47-11z" fill="url(#face)"/><path d="M435 621l47 11v8l-46-12q-6-1-7-6z" fill="#aaa9b0"/>
<ellipse cx="523.5" cy="515" rx="12.5" ry="30" transform="rotate(9 523.5 515)" fill="url(#bore)"/>
<path d="M658 480l54-36-10 116 14 1 37 10-141 96 6-97q7-71 40-90z" fill="url(#lil)"/>
<path d="M753 571l-141 96-7 3 6-10 137-90z" fill="#8a8892"/>
<path d="M605 459l45 12c-28 18-39 55-42 98l-45-11c3-40 19-87 42-99z" fill="url(#bend)"/>
<path d="M650 471l8 9q-33 19-39 90h-11c2-43 15-81 42-99z" fill="url(#rim)"/>
<path d="M650 471l57-37q10-3 18 3l-14 8-53 35z" fill="#bdbbc3"/><path d="M655 474l56-37" stroke="#dedde3" stroke-width="3"/>
<path d="M712 442q7-8 13-5l-10 124-13-1z" fill="url(#rim)"/>
<path d="M563 558l45 11-7 96-47-11z" fill="url(#face)"/><path d="M608 569h11l-7 96q-5 7-13 4z" fill="url(#rim)"/><path d="M555 654l46 11 5 4-5 2-42-11q-5-1-4-6z" fill="#afafb5"/>
<ellipse cx="651.5" cy="547.5" rx="12.5" ry="30" transform="rotate(9 651.5 547.5)" fill="url(#bore)"/>
</g>
<path d="M617 319l-68-17 44-31 67 16-12 10" fill="none" stroke="#9a9a9a" stroke-width=".8"/>
<g stroke="#222"><path d="M595 184l-9 104M592 181l24 6M583 289l23 6" fill="none" stroke-width=".9"/><path d="M595 183l-3 8 5 0zM586 289l-2-8 5 0z" fill="#111" stroke-width=".5"/></g>
<path d="M554 183.5h11M570 183.5h12M567.5 170v11M567.5 186v11" stroke="#222" stroke-width="1.6"/><circle cx="567.5" cy="183.5" r="1"/>
<path d="M612 411l2-29" stroke="#11b" stroke-width="2.5"/><path d="M614.5 373l4 13h-8z" fill="#11b"/>
<path d="M612 412l12-7" stroke="#1a1" stroke-width="2.5"/><path d="M630 400l-10 2 4 7z" fill="#1a1"/>
<path d="M612 412l26 5" stroke="#d11" stroke-width="2.5"/><path d="M650 420l-12-6-2 7z" fill="#d11"/><circle cx="612" cy="412" r="4.5" fill="#f3e60e" stroke="#a99900" stroke-width=".5"/>
<text class="ax" x="611" y="367" fill="#22c">Z</text><text class="ax" x="630" y="400" fill="#2d3">Y</text><text class="ax" x="654" y="427" fill="#d11">X</text>
<foreignObject x="559" y="227" width="62" height="19"><input class="dimval" value="18.229 mm" aria-label="Dimension value"></foreignObject>
<g stroke="#999" stroke-width=".8" stroke-linejoin="round"><path d="M1120 586l32-14 59 12-25 17z" fill="#fff"/><path d="M1120 586l66 15-8 68-61-19z" fill="#fff"/><path d="M1186 601l25-17-8 59-25 26z" fill="#ececec"/></g>
<text class="cube" x="1150" y="634" font-size="15" text-anchor="middle" transform="rotate(8 1150 628)">FRONT</text><text class="cube" x="1169" y="588" font-size="10" text-anchor="middle" transform="rotate(11 1169 585)">TOP</text><text class="cube" x="1195" y="628" font-size="8" text-anchor="middle" transform="rotate(-42 1195 625)">RIGHT</text>
<path d="M1165 617l2-29" stroke="#66d" stroke-width="1.5"/><path d="M1165 617l14-9" stroke="#7e8" stroke-width="1.5"/><path d="M1165 617l28 7" stroke="#e66" stroke-width="1.5"/><circle cx="1165" cy="617" r="3" fill="#f4e93a" stroke="#a90" stroke-width=".6"/>
</svg>

<div class="tree">
<div class="grip"></div>
<div class="rows">
<div class="r0"><button class="t"><svg><use href="#part"/></svg><svg><use href="#unlock"/></svg>tool holder.par</button></div>
<div class="r1"><button class="e" aria-label="Collapse PMI">−</button><input type="checkbox" id="k1"><label class="t off" for="k1"><svg><use href="#tpmi"/></svg>PMI</label></div>
<div class="r2"><button class="e" aria-label="Collapse Dimensions">−</button><input type="checkbox" id="k2"><label class="t off" for="k2"><svg><use href="#tdim"/></svg>Dimensions</label></div>
<div class="r3"><i class="e0"></i><input type="checkbox" id="k3"><label class="t off" for="k3"><svg><use href="#lock"/></svg><svg class="w"><use href="#tlin"/></svg>Linear 1</label></div>
<div class="r1"><i class="e0"></i><input type="checkbox" id="k4" checked><label class="t" for="k4"><svg><use href="#tbase"/></svg>Base</label></div>
<div class="r1"><i class="e0"></i><i class="c0"></i><button class="t"><svg><use href="#tmat"/></svg>Material (Aluminum, 1060)</button></div>
<div class="r1"><button class="e" aria-label="Expand planes">+</button><input type="checkbox" id="k5"><label class="t off" for="k5"><svg><use href="#tpl"/></svg>Base Reference Planes</label></div>
<div class="r1"><button class="e" aria-label="Collapse bodies">−</button><input type="checkbox" id="k6" checked><label class="t" for="k6"><svg><use href="#tbod"/></svg>Design Bodies</label></div>
<div class="r2"><i class="e0"></i><input type="checkbox" id="k7" checked><label class="t" for="k7"><svg><use href="#tbod1"/></svg>Design Body_1</label></div>
<div class="r1"><button class="e" aria-label="Collapse Synchronous">−</button><button class="t sync"><svg><use href="#tsync"/></svg>Synchronous<svg class="mark" viewBox="0 0 14 10"><path d="M14 1v8L0 5z" fill="#fff3d6"/></svg></button></div>
<div class="r2 bold"><button class="e" aria-label="Collapse Features">−</button><i class="c0"></i><button class="t"><svg><use href="#tfeat"/></svg>Features</button></div>
<div class="r3 bold"><i class="e0"></i><i class="c0"></i><button class="t"><svg><use href="#info"/></svg><svg class="w"><use href="#bf"/></svg>BodyFeature 1</button></div>
<div class="r3 bold"><i class="e0"></i><i class="c0"></i><button class="t"><svg><use href="#trnd"/></svg>Round 12</button></div>
<div class="r3 bold"><i class="e0"></i><i class="c0"></i><button class="t"><svg><use href="#trnd"/></svg>Round 13</button></div>
<div class="r3 bold"><i class="e0"></i><i class="c0"></i><button class="t"><svg><use href="#trnd"/></svg>Round 17</button></div>
<div class="r3 bold"><i class="e0"></i><i class="c0"></i><button class="t"><svg><use href="#trnd"/></svg>Round 19</button></div>
<div class="r3 bold"><i class="e0"></i><i class="c0"></i><button class="t"><svg><use href="#tcut"/></svg>Cutout 21</button></div>
<div class="r2 bold"><button class="e" aria-label="Expand Relationships">+</button><i class="c0"></i><button class="t">Relationships</button></div>
</div>
</div>

<div class="cmd">
<button class="sel" aria-label="Move face"><svg><use href="#c1"/></svg></button>
<button class="sp" aria-label="Direction"><svg><use href="#c2"/></svg></button>
<button aria-label="Copy face"><svg><use href="#c3"/></svg></button>
<button aria-label="Detach"><svg><use href="#c4"/></svg></button>
<button class="sp" aria-label="Extend or tip"><svg><use href="#c5"/></svg></button>
<button class="sp" aria-label="Keypoints"><svg><use href="#c6"/></svg></button>
</div>

<div class="opts">
<div class="oh"><button>?</button><button aria-label="Play"><svg viewBox="0 0 12 8"><path d="M4 1v6l5-3z" fill="#25538c"/></svg></button><button aria-label="Pin"><svg viewBox="0 0 12 10"><path d="M4 1v7M7 1v7M8 1v7M2 8h8M4 1h4" stroke="#25538c" stroke-width="1.3"/></svg></button></div>
<div class="ob">
<label><input type="checkbox" checked>Design Intent</label>
<label class="in"><input type="checkbox" checked>Symmetric</label>
<label class="in"><input type="checkbox">Coplanar</label>
<label><input type="checkbox" checked>Dimensions</label>
<label><input type="checkbox" checked>Relationships</label>
<a href="#">Advanced...</a>
</div>
<div class="of"><span>Hide details</span><button aria-label="Hide details"><svg><use href="#chev"/></svg></button></div>
</div>
</div>

<div class="prompt"><div class="pl"><svg><use href="#kb"/></svg>PromptBar</div><div class="pbox">
<button aria-label="Increase font"><svg><use href="#tup"/></svg></button><button aria-label="Decrease font"><svg><use href="#tdn"/></svg></button><button aria-label="Collapse"><svg><use href="#chev"/></svg></button><button aria-label="Dock"><svg viewBox="0 0 12 12"><path d="M1 2h10M1 4h10" stroke="#111"/><path d="M2 6h8l-4 5z" fill="#111"/></svg></button><button aria-label="Pin"><svg><use href="#pin"/></svg></button><button aria-label="Close prompt"><svg><use href="#x"/></svg></button>
</div></div>
</main>

<aside class="rail">
<button aria-label="Help"><svg><use href="#help"/></svg></button>
<button class="vt"><svg><use href="#req"/></svg><span>Requirements</span></button>
<button class="yt" aria-label="YouTube"><b>You</b><b>Tube</b></button><button aria-label="Facebook"><svg><use href="#fb"/></svg></button><button aria-label="Community"><svg><use href="#form"/></svg></button>
</aside>
</div>
</body>
</html>
```

FILE: styles.css
```css
* { box-sizing: border-box; }
body { margin: 0; height: 100vh; overflow: hidden; display: flex; flex-direction: column; background: #fff; border-right: 2px solid #3f5f8c; font: 9px/12px "Open Sans", "Noto Sans", sans-serif; color: #444; }
button { font: inherit; color: inherit; background: none; border: 0; padding: 0; margin: 0; display: flex; align-items: center; justify-content: center; flex: none; }
a { color: inherit; text-decoration: none; }
svg { flex: none; }
.sprite { position: absolute; }

.top { display: flex; height: 20px; flex: none; align-items: stretch; }
.appbtn { width: 66px; border-bottom: 1px solid #dcdcdc; }
.appbtn::after { content: ""; display: block; width: 28px; height: 6px; margin-left: 6px; border: 1px solid #8b97b0; border-top: 0; border-radius: 0 0 4px 4px; }
.menu { display: flex; flex: 1; border-bottom: 1px solid #dcdcdc; }
.menu a { padding: 4px 13px 0; height: 20px; white-space: nowrap; }
.menu .on { color: #2f5da0; background: #fff; border: 1px solid #dcdcdc; border-width: 0 1px; padding: 4px 11px 0; }
.brand { font-size: 15px; line-height: 16px; color: #0f8c8c; padding-right: 40px; border-bottom: 1px solid #dcdcdc; }
.wctl { display: flex; border-bottom: 1px solid #dcdcdc; }
.wctl button { width: 18px; height: 16px; }
.wctl svg { width: 13px; height: 13px; }
.wctl .s { width: 15px; }
.wctl .s svg { width: 10px; height: 10px; }

.ribbon { display: grid; grid-template-columns: 79fr 67fr 36fr 166fr 107fr 148fr 304fr 83fr 39fr 142fr 41fr 63fr 4fr; height: 76px; flex: none; border-bottom: 2px solid #e3e3e3; padding-top: 4px; }
.g { display: flex; flex-direction: column; align-items: center; position: relative; min-width: 0; }
.g:not(:last-child)::after { content: ""; position: absolute; right: 0; top: 2px; height: 62px; width: 1px; background: #e0e0e0; }
.g h2 { margin: 0; font: inherit; color: #7b7b7b; line-height: 10px; white-space: nowrap; }
.b { display: flex; height: 54px; }
.end .b { align-self: flex-end; }
.col { display: flex; flex-direction: column; }
.blue { color: #15508f; }
.grid { display: grid; grid-template-columns: repeat(4, 18px); grid-auto-rows: 18px; align-content: start; }
.wide { grid-template-columns: repeat(4, 28px); }
.three { grid-template-columns: repeat(3, 18px); }
.ic { width: 18px; height: 18px; }
.ic svg { width: 14px; height: 14px; }
.m { width: 28px; justify-content: flex-start; padding-left: 2px; }
.m::after, .tri, .dn::after { content: ""; border: 2px solid transparent; border-top: 3px solid #666; border-bottom: 0; margin-left: 5px; }
.end .m { width: 26px; }
.end .m::after, .solids .m::after { margin-left: 1px; }
.solids .m { width: 22px; }
.hot { background: #c6d6f2; }
.pat { padding-top: 5px; gap: 6px; }
.v { width: 7px; background: linear-gradient(#dcdcdc, #dcdcdc) 3px 0 / 1px 100% no-repeat; }
.n { width: 6px; }
.lg { width: 38px; flex-direction: column; justify-content: flex-start; line-height: 10px; padding-top: 2px; text-align: center; }
.solids .lg { width: 39px; }
.lg svg { width: 24px; height: 24px; margin-bottom: 7px; }
.lg.x { width: 48px; }
.two { width: 32px; }
.dn::after { margin: 6px 0 0; }
.tri { display: inline-block; margin: 0 0 2px; }
.off { color: #a5a5a5; }
.sm svg { width: 16px; height: 16px; margin: 2px 0 13px; }

.work { display: flex; flex: 1; min-height: 0; }
.rail { width: 26px; flex: none; background: #f3f3f3; display: flex; flex-direction: column; align-items: center; gap: 13px; padding-top: 7px; }
.rail:first-child { padding-right: 4px; }
.rail svg { width: 18px; height: 18px; }
.rail button { width: 18px; height: 18px; }
.rail .vt { height: 130px; flex-direction: column; justify-content: flex-start; gap: 2px; }
.vt span { writing-mode: vertical-rl; font-size: 10px; line-height: 14px; color: #46658f; white-space: nowrap; }
.rail .yt { flex-direction: column; font: bold 8px/8px "Liberation Sans", sans-serif; color: #345; background: #fff; }
.yt b + b { background: #b4282d; color: #fff; width: 18px; height: 9px; font-size: 7px; }

.mid { flex: 1; min-width: 0; display: flex; flex-direction: column; }
.tabs { display: flex; height: 26px; flex: none; padding: 2px 2px 0; border-bottom: 1px solid #4f6d95; font-size: 10px; }
.tab { display: flex; align-items: center; gap: 3px; padding: 0 2px 0 13px; color: #777; }
.tab > svg { width: 14px; height: 14px; }
.tab button { margin-left: 10px; color: #666; }
.tab button svg { width: 11px; height: 11px; }
.tab.on { background: #2b5797; color: #fff; }
.tab.on button { color: #fff; }
.tabctl { margin-left: auto; display: flex; color: #555; gap: 1px; }
.tabctl svg { width: 12px; height: 12px; }
.view { flex: 1; min-height: 0; position: relative; background: #fafafa; overflow: hidden; }
.model { display: block; width: 100%; height: 100%; }
.ax { font: 10px "Liberation Sans", sans-serif; }
.cube { font-family: "Liberation Sans", sans-serif; fill: #555; }
.dimval { display: block; width: 62px; height: 19px; border: 1px solid #8aa8dc; padding: 0; margin: 0; outline: 0; text-align: center; font: 9px/11px "Open Sans", sans-serif; color: #fff; background: linear-gradient(#0f6fc9, #0f6fc9) center / 56px 11px no-repeat #fff; }

.tree { position: absolute; left: 0; top: 0; width: 204px; color: #333; }
.grip { height: 8px; border: 1px solid #bbb; background: linear-gradient(#f2f2f2, #c9c9c9); display: flex; justify-content: center; align-items: center; }
.grip::after { content: ""; width: 28px; border-top: 2px dotted #66729c; }
.rows { display: grid; grid-template-rows: repeat(18, 1fr); height: 260px; margin-top: 2px; }
.rows > div { display: flex; align-items: center; min-height: 0; white-space: nowrap; }
.r0 { padding-left: 4px; }
.r1 { padding-left: 14px; }
.r2 { padding-left: 34px; }
.r3 { padding-left: 51px; }
.e, .e0 { width: 9px; height: 9px; margin-right: 6px; flex: none; }
.e { border: 1px solid #b5b5b5; background: #f4f4f4; font-size: 9px; line-height: 7px; color: #222; }
.c0 { width: 12px; margin-right: 5px; flex: none; }
input[type="checkbox"] { appearance: none; width: 12px; height: 11px; margin: 0 5px 0 0; flex: none; border: 1px solid #333; background: #fff; }
input:checked::after { content: ""; display: block; width: 3px; height: 6px; margin: 0 0 0 3px; border: solid #14233c; border-width: 0 2px 2px 0; transform: rotate(40deg); }
.t { display: flex; align-items: center; justify-content: flex-start; gap: 4px; height: 13px; padding: 0 4px 0 1px; border: 1px solid #c3cad2; border-top-color: #e0e5ea; border-left-color: #e0e5ea; background: linear-gradient(#f7f9fb, #dfe6ee); line-height: 11px; }
.t svg { width: 12px; height: 12px; }
.t .w { width: 14px; }
.t.off { color: #8b8b8b; }
.bold .t { font-weight: 700; color: #111; }
.r2 .t:not(:has(svg)) { padding-left: 2px; }
.r0 .t { gap: 3px; }
.sync { width: 166px; font-weight: 700; color: #222; background: linear-gradient(#ffdf80, #f2ae2a); border-color: #e2a93d; }
.sync .mark { margin-left: auto; width: 14px; height: 10px; }

.cmd { position: absolute; left: 226px; top: 0; display: flex; align-items: center; gap: 4px; padding: 3px 2px; height: 36px; background: #fff; border: 1px solid #5a6c80; }
.cmd button { width: 35px; height: 26px; border: 1px solid #9fb0c4; border-radius: 1px; background: linear-gradient(#f1f6fb 50%, #dce7f2 50%); }
.cmd svg { width: 18px; height: 18px; }
.cmd .sel { width: 39px; height: 30px; border: 2px solid #b29472; background: linear-gradient(#fbc185 40%, #fb9a3c 60%, #fdb35c); }
.cmd .sel svg { width: 21px; height: 21px; }
.cmd .sp { padding-left: 4px; justify-content: space-between; background: linear-gradient(#fbdcae 50%, #fccd83 50%) left / 25px 100% no-repeat #edf3f9; }
.cmd .sp::after { content: ""; border: 3px solid transparent; border-top: 4px solid #000; border-bottom: 0; margin-right: 1px; }

.opts { position: absolute; right: 152px; top: 11px; width: 120px; background: #efefef; border: 1px solid #5ba0c0; border-top-width: 2px; color: #222; }
.oh { display: flex; gap: 5px; padding: 2px 4px 5px 3px; border-bottom: 1px solid #4c9cc4; }
.oh button, .of button { width: 17px; height: 13px; border: 1px solid #3567a0; background: #fff; color: #25538c; font-weight: 700; }
.oh svg { width: 12px; height: 9px; }
.oh button:last-child { margin-left: auto; }
.ob { display: flex; flex-direction: column; padding: 1px 3px 0; }
.ob label, .ob a { display: flex; align-items: center; height: 16px; }
.opts input { width: 10px; height: 10px; border-color: #3b6ba8; }
.opts input:checked::after { border-width: 0 1px 1px 0; }
.ob .in { padding-left: 8px; }
.ob a { padding-left: 20px; }
.of { display: flex; align-items: center; justify-content: flex-end; gap: 3px; height: 18px; margin-left: 3px; padding-right: 4px; border-top: 1px solid #4c9cc4; }
.of svg { width: 10px; height: 10px; }

.prompt { height: 16px; flex: none; display: flex; border-top: 1px solid #c8c8c8; background: #f5f5f5; overflow: hidden; }
.pl { display: flex; align-items: center; gap: 4px; width: 88px; padding: 9px 0 0 4px; font-size: 10px; color: #54729b; }
.pl svg { width: 18px; height: 12px; }
.pbox { flex: 1; display: flex; justify-content: flex-end; gap: 2px; margin-top: 3px; padding: 2px 1px 0 0; background: #fff; border: 1px solid #bbb; border-width: 1px 0 0 1px; color: #111; }
.pbox button { width: 12px; height: 12px; }
.pbox svg { width: 11px; height: 11px; }
```
